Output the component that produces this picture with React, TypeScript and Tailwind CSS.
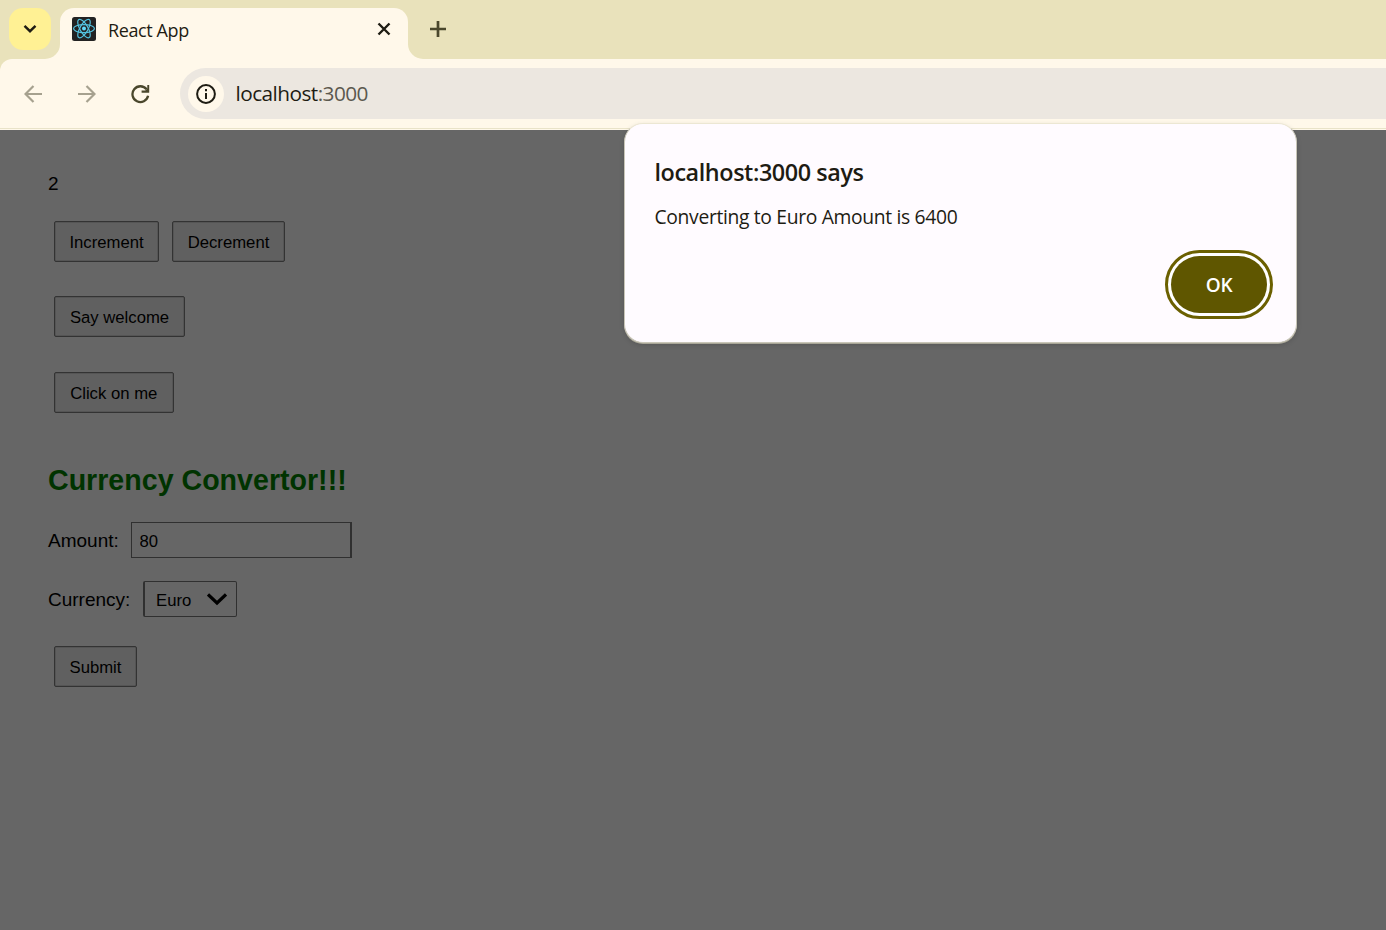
import { useState } from "react";
import type { ReactNode } from "react";

function ReactLogo() {
  return (
    <svg width="24" height="24" viewBox="0 0 24 24" fill="none" className="shrink-0">
      <rect width="24" height="24" rx="2.5" fill="#222222" />
      <g stroke="#53c1de" strokeWidth="1.15">
        <ellipse cx="12" cy="11.600" rx="10.400" ry="4" />
        <ellipse cx="12" cy="11.600" rx="10.400" ry="4" transform="rotate(60 12 11.6)" />
        <ellipse cx="12" cy="11.600" rx="10.400" ry="4" transform="rotate(120 12 11.6)" />
      </g>
      <circle cx="12" cy="11.600" r="2" fill="#61dafb" />
    </svg>
  );
}

function TabStrip() {
  return (
    <div className="flex h-[59px] bg-[#fff8ea]">
      <div className="w-[60px] rounded-br-[15px] bg-[#e9e2bb] pt-2 pl-[9px]">
        <button className="flex h-[42px] w-[42px] items-center justify-center rounded-[14px] bg-[#fff194]">
          <svg width="14" height="10" viewBox="0 0 14 10" fill="none" stroke="#1e1c13" strokeWidth="2.4">
            <path d="M1.5 1.8 7 7.2l5.5-5.4" />
          </svg>
        </button>
      </div>
      <div className="w-[348px] bg-[#e9e2bb] pt-2">
        <div className="flex h-[51px] items-start rounded-t-[14px] bg-[#fff8ea] pt-[9px] pr-[17px] pl-3">
          <ReactLogo />
          <span className="ml-3 pt-px text-[18px] leading-6 tracking-[-0.4px] text-[#1e1c13]">React App</span>
          <svg width="14" height="14" viewBox="0 0 14 14" fill="none" stroke="#1e1c13" strokeWidth="2.4" className="mt-[5px] ml-auto">
            <path d="m1.500 1.500 11 11M12.500 1.500l-11 11" />
          </svg>
        </div>
      </div>
      <div className="flex-1 rounded-bl-[15px] bg-[#e9e2bb] pt-[21px] pl-[22px]">
        <svg width="16" height="16" viewBox="0 0 16 16" fill="none" stroke="#4a472c" strokeWidth="2.7">
          <path d="M8 0v16M0 8h16" />
        </svg>
      </div>
    </div>
  );
}

function Toolbar() {
  return (
    <div className="bg-[#e9e2bb]">
      <div className="flex h-[69px] items-center rounded-tl-[12px] bg-[#fff8ea] pl-6">
        <svg width="18" height="18" viewBox="0 0 18 18" fill="none" stroke="#a6a18f" strokeWidth="2.200">
          <path d="M18 9H1.600M9.500 1 1.500 9l8 8" />
        </svg>
        <svg width="18" height="18" viewBox="0 0 18 18" fill="none" stroke="#a6a18f" strokeWidth="2.200" className="ml-9">
          <path d="M0 9h16.400M8.500 1l8 8-8 8" />
        </svg>
        <svg width="19" height="20" viewBox="0 0 19 20" fill="none" className="ml-[35px]">
          <path d="M15.600 5.300A7.900 7.900 0 1 0 17.100 11.800" stroke="#4a472c" strokeWidth="2.300" />
          <path d="M18.200 1v7.800h-7.600V6.500h3.700l2-2V1z" fill="#4a472c" />
        </svg>
        <div className="ml-[30px] flex h-[51px] flex-1 items-center rounded-l-full bg-[#ece7e0] pl-[8px]">
          <div className="flex h-9 w-9 items-center justify-center rounded-full bg-[#fff8ea]">
            <svg width="20" height="20" viewBox="0 0 20 20" fill="none" stroke="#1e1c13" strokeWidth="2">
              <circle cx="10" cy="10" r="8.900" />
              <path d="M10 9v6M10 5v2.200" />
            </svg>
          </div>
          <span className="ml-[11.500px] pb-[2px] text-[20.800px] leading-7 tracking-[-0.550px] text-[#1e1c13]">
            localhost<span className="text-[#5b584e]">:3000</span>
          </span>
        </div>
      </div>
      <div className="h-px bg-[#e9e3c9]" />
      <div className="h-px bg-[#fff8ea]" />
    </div>
  );
}

function PageButton({ children, onClick, className }: { children: ReactNode; onClick?: () => void; className: string }) {
  return (
    <button
      onClick={onClick}
      className={`flex h-[41px] items-center justify-center rounded-[2px] border-[1.500px] border-[#333333] bg-[#606060] pt-[2px] text-[16.700px] text-black shadow-[inset_0_0_0_0.500px_#4a4a4a] ${className}`}
    >
      {children}
    </button>
  );
}

function Page() {
  const [count, setCount] = useState(2);
  const [amount, setAmount] = useState("80");
  return (
    <main className="flex flex-1 flex-col items-start bg-[#666666] pt-10 pl-12 font-['Liberation_Sans',sans-serif] text-[19px] text-black">
      <p className="h-[51px] leading-[27px]">{count}</p>
      <div className="ml-[6px] flex gap-[13px]">
        <PageButton className="w-[105px]" onClick={() => setCount(count + 1)}>Increment</PageButton>
        <PageButton className="w-[113px]" onClick={() => setCount(count - 1)}>Decrement</PageButton>
      </div>
      <PageButton className="mt-[34px] ml-[6px] w-[131px]">Say welcome</PageButton>
      <PageButton className="mt-[35px] ml-[6px] w-[119.500px]">Click on me</PageButton>
      <h1 className="mt-[49px] text-[28.600px] leading-9 font-bold text-[#003300]">Currency Convertor!!!</h1>
      <div className="mt-[24px] flex h-9 items-center">
        <label htmlFor="amount" className="w-[83px] pt-[2px]">Amount:</label>
        <input
          id="amount"
          value={amount}
          onChange={(e) => setAmount(e.target.value)}
          className="h-9 w-[221px] border border-r-2 border-[#303030] bg-[#666666] px-[7.500px] pt-1 text-[16.700px]"
        />
      </div>
      <div className="mt-[23px] flex h-9 items-center">
        <span className="w-[95px] pt-[2px]">Currency:</span>
        <div className="flex h-9 w-[94px] items-center rounded-[2px] border border-l-2 border-[#303030] pt-[3px] pl-[11px] text-[16.700px]">
          <span className="pt-px">Euro</span>
          <svg width="20" height="14" viewBox="0 0 20 14" fill="none" stroke="#000000" strokeWidth="3.200" className="mb-[3px] ml-[16px]">
            <path d="m1 2.500 9 8.500 9-8.500" />
          </svg>
        </div>
      </div>
      <PageButton className="mt-[29px] ml-[6px] w-[83px]">Submit</PageButton>
    </main>
  );
}

function AlertDialog({ onClose }: { onClose: () => void }) {
  return (
    <div
      role="alertdialog"
      className="absolute top-[123px] left-[624px] flex h-[220px] w-[673px] flex-col rounded-[19px] border border-x-[#c9c6b8] border-t-[#ece7d3] border-b-[#c9c6b8] bg-[#fffbff] pt-[32px] pr-[23px] pl-[29.500px] text-[#1e1c13] shadow-[0_1px_0_0_#a9a697,0_2px_5px_rgba(0,0,0,0.15)]"
    >
      <h2 className="text-[23.400px] leading-8 font-semibold tracking-[-0.430px]">localhost:3000 says</h2>
      <p className="mt-[15px] text-[19.300px] leading-7 tracking-[-0.330px]">Converting to Euro Amount is 6400</p>
      <button
        onClick={onClose}
        className="mt-[19px] flex h-[69px] w-[108px] items-center justify-center self-end rounded-full border-[3px] border-[#6b6000] bg-white p-[3px]"
      >
        <span className="flex h-full w-full items-center justify-center rounded-full bg-[#5f5600] pt-[2px] text-[19px] font-semibold tracking-[-0.200px] text-white">OK</span>
      </button>
    </div>
  );
}

export default function App() {
  const [open, setOpen] = useState(true);
  return (
    <div className="relative flex h-[930px] w-[1386px] flex-col overflow-hidden font-['Open_Sans','Noto_Sans',sans-serif]">
      <TabStrip />
      <Toolbar />
      <Page />
      {open && <AlertDialog onClose={() => setOpen(false)} />}
    </div>
  );
}
